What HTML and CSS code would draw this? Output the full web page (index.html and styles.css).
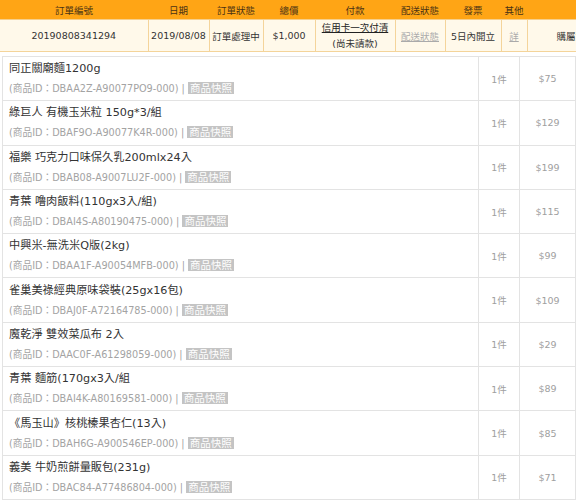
FILE: index.html
```html
<!DOCTYPE html>
<html lang="zh-Hant">
<head>
<meta charset="utf-8">
<link rel="stylesheet" href="styles.css">
</head>
<body>
<table class="order">
  <colgroup>
    <col class="c-no"><col class="c-date"><col class="c-status"><col class="c-total"><col class="c-pay"><col class="c-ship"><col class="c-inv"><col class="c-other"><col class="c-more">
  </colgroup>
  <thead>
    <tr><th>訂單編號</th><th>日期</th><th>訂單狀態</th><th>總價</th><th>付款</th><th>配送狀態</th><th>發票</th><th>其他</th><th></th></tr>
  </thead>
  <tbody>
    <tr>
      <td>20190808341294</td>
      <td>2019/08/08</td>
      <td class="status">訂單處理中</td>
      <td>$1,000</td>
      <td class="pay"><a class="paylink">信用卡一次付清</a><div class="pending">(尚未請款)</div></td>
      <td><a class="muted-link">配送狀態</a></td>
      <td>5日內開立</td>
      <td><a class="muted-link">詳</a></td>
      <td class="more">購屬資訊</td>
    </tr>
  </tbody>
</table>

<table class="items">
  <colgroup><col class="c-name"><col class="c-qty"><col class="c-price"></colgroup>
  <tbody>
    <tr><td class="name"><div class="title">同正關廟麵1200g</div><div class="pid">(商品ID：DBAA2Z-A90077PO9-000) | <span class="snap">商品快照</span></div></td><td class="qty">1件</td><td class="price">$75</td></tr>
    <tr><td class="name"><div class="title">綠巨人 有機玉米粒 150g*3/組</div><div class="pid">(商品ID：DBAF9O-A90077K4R-000) | <span class="snap">商品快照</span></div></td><td class="qty">1件</td><td class="price">$129</td></tr>
    <tr><td class="name"><div class="title">福樂 巧克力口味保久乳200mlx24入</div><div class="pid">(商品ID：DBAB08-A9007LU2F-000) | <span class="snap">商品快照</span></div></td><td class="qty">1件</td><td class="price">$199</td></tr>
    <tr><td class="name"><div class="title">青葉 噜肉飯料(110gx3入/組)</div><div class="pid">(商品ID：DBAI4S-A80190475-000) | <span class="snap">商品快照</span></div></td><td class="qty">1件</td><td class="price">$115</td></tr>
    <tr><td class="name"><div class="title">中興米-無洗米Q版(2kg)</div><div class="pid">(商品ID：DBAA1F-A90054MFB-000) | <span class="snap">商品快照</span></div></td><td class="qty">1件</td><td class="price">$99</td></tr>
    <tr><td class="name"><div class="title">雀巢美祿經典原味袋裝(25gx16包)</div><div class="pid">(商品ID：DBAJ0F-A72164785-000) | <span class="snap">商品快照</span></div></td><td class="qty">1件</td><td class="price">$109</td></tr>
    <tr><td class="name"><div class="title">魔乾淨 雙效菜瓜布 2入</div><div class="pid">(商品ID：DAAC0F-A61298059-000) | <span class="snap">商品快照</span></div></td><td class="qty">1件</td><td class="price">$29</td></tr>
    <tr><td class="name"><div class="title">青葉 麵筋(170gx3入/組</div><div class="pid">(商品ID：DBAI4K-A80169581-000) | <span class="snap">商品快照</span></div></td><td class="qty">1件</td><td class="price">$89</td></tr>
    <tr><td class="name"><div class="title">《馬玉山》核桃榛果杏仁(13入)</div><div class="pid">(商品ID：DBAH6G-A900546EP-000) | <span class="snap">商品快照</span></div></td><td class="qty">1件</td><td class="price">$85</td></tr>
    <tr><td class="name"><div class="title">義美 牛奶煎餅量販包(231g)</div><div class="pid">(商品ID：DBAC84-A77486804-000) | <span class="snap">商品快照</span></div></td><td class="qty">1件</td><td class="price">$71</td></tr>
  </tbody>
</table>
</body>
</html>
```

FILE: styles.css
```css
html, body {
  margin: 0;
  padding: 0;
  background: #fff;
  overflow: hidden;
}
body {
  width: 576px;
  height: 502px;
  font-family: "DejaVu Sans", "Noto Sans CJK TC", sans-serif;
  color: #333;
}
a { cursor: pointer; }

.order {
  border-collapse: collapse;
  table-layout: fixed;
  width: 617px;
  font-size: 9.5px;
}
.c-no { width: 148px; }
.c-date { width: 61px; }
.c-status { width: 54px; }
.c-total { width: 52px; }
.c-pay { width: 80px; }
.c-ship { width: 50px; }
.c-inv { width: 56px; }
.c-other { width: 26px; }
.c-more { width: 90px; }

.order th {
  background: #ffa515;
  color: #4a3214;
  font-weight: normal;
  height: 19px;
  padding: 0;
  text-align: center;
  border-bottom: 1px solid #f6cf8c;
}
.order td {
  background: #fff9ea;
  height: 31px;
  padding: 0 1px;
  text-align: center;
  white-space: nowrap;
  border: 1px solid #f4d49a;
  border-top: none;
}
.order td:first-child { border-left: none; }
.order td.more {
  text-align: left;
  padding-left: 29px;
  border-right: none;
}
.paylink {
  color: #222;
  text-decoration: underline;
  display: block;
  line-height: 14px;
}
.pending { line-height: 14px; margin-top: 2px; }
.muted-link { color: #aaa; text-decoration: underline; }

.items {
  border-collapse: collapse;
  table-layout: fixed;
  width: 573px;
  margin: 4px 0 0 2px;
}
.c-name { width: 476px; }
.c-qty { width: 41px; }
.c-price { width: 56px; }
.items td {
  border: 1px solid #e3e3e3;
  height: 43.3px;
  padding: 0;
  vertical-align: middle;
}
.items td.name { padding-left: 6px; }
.title {
  font-size: 11.2px;
  line-height: 14px;
  color: #333;
  white-space: nowrap;
}
.pid {
  font-size: 9.7px;
  line-height: 13px;
  color: #a3a3a3;
  margin-top: 6px;
  white-space: nowrap;
}
.snap {
  background: #c4c4c4;
  color: #fff;
  padding: 0 2px;
  font-size: 10.5px;
}
.qty, .price {
  text-align: center;
  font-size: 9.5px;
  color: #a0a0a0;
}
```
